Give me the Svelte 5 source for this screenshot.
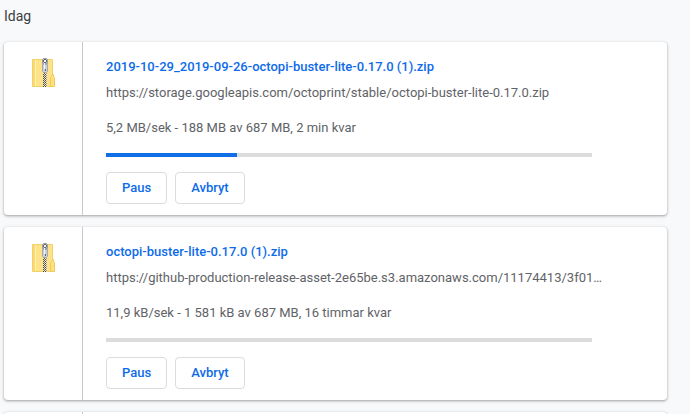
<script lang="ts">
	interface Download {
		name: string;
		url: string;
		status: string;
		percent: number;
	}

	const downloads: Download[] = [
		{
			name: '2019-10-29_2019-09-26-octopi-buster-lite-0.17.0 (1).zip',
			url: 'https://storage.googleapis.com/octoprint/stable/octopi-buster-lite-0.17.0.zip',
			status: '5,2 MB/sek - 188 MB av 687 MB, 2 min kvar',
			percent: 27
		},
		{
			name: 'octopi-buster-lite-0.17.0 (1).zip',
			url: 'https://github-production-release-asset-2e65be.s3.amazonaws.com/11174413/3f01…',
			status: '11,9 kB/sek - 1 581 kB av 687 MB, 16 timmar kvar',
			percent: 0
		}
	];
</script>

{#snippet zipIcon()}
	<svg class="zip" viewBox="0 0 24 30" aria-hidden="true">
		<path d="M1.5 1.5H21.5V28.5H1.5Z" fill="#fee38a" stroke="#f2d165" />
		<path d="M2 2H4V28H2Z" fill="#fbd974" />
		<path d="M4.5 2V28" stroke="#fff0b0" />
		<path d="M19.5 28.5V19.5L20.5 18.5V17.5L21.5 16.5H22.5V18.5L23.5 19.5V28.5Z" fill="#fddf7c" stroke="#eecb5c" />
		<path d="M12 13H16V29H12Z" fill="#efe9cc" />
		<path d="M12.5 14V29" stroke="#4c4a46" stroke-dasharray="1 1" />
		<path d="M13.5 15V29" stroke="#5c5a54" stroke-dasharray="1 1" />
		<path d="M14.5 14V29" stroke="#4c4a46" stroke-dasharray="1 1" />
		<path d="M15.5 15V29" stroke="#a39d84" stroke-dasharray="1 1" />
		<path d="M11.5 1.5L12.5 0.5H15.5L16.5 1.5V5.5H11.5Z" fill="#b5b9be" stroke="#999ea4" />
		<path d="M11.5 6.5H16.5V13.5L15.5 14.5H12.5L11.5 13.5Z" fill="#cdd0d4" stroke="#a3a8ad" />
		<path d="M13 1H15V2H16V4H15V5H13V4H12V2H13Z" fill="#62676d" />
		<path d="M13 2H15V4H13Z" fill="#f5f6f7" />
		<path d="M13.5 5V11" stroke="#f2f4f6" />
		<path d="M14 11H15V13H14Z" fill="#62676d" />
	</svg>
{/snippet}

<main>
	<h2>Idag</h2>

	<div class="list">
		{#each downloads as item}
			<article class="card">
				<div class="icon">{@render zipIcon()}</div>
				<div class="details">
					<a class="name" href="#download">{item.name}</a>
					<div class="url">{item.url}</div>
					<div class="status">{item.status}</div>
					<div
						class="progress"
						role="progressbar"
						aria-label={item.name}
						aria-valuenow={item.percent}
						aria-valuemin="0"
						aria-valuemax="100"
					>
						<div class="bar" style="width: {item.percent}%"></div>
					</div>
					<div class="actions">
						<button type="button">Paus</button>
						<button type="button">Avbryt</button>
					</div>
				</div>
			</article>
		{/each}
		<article class="card">
			<div class="icon">{@render zipIcon()}</div>
		</article>
	</div>
</main>

<style>
	:global(body) {
		margin: 0;
		background: #f8f9fa;
	}

	main {
		box-sizing: border-box;
		height: 100vh;
		overflow: hidden;
		padding: 6px 23px 0 4px;
		font-family: Roboto, 'Liberation Sans', sans-serif;
		font-size: 13px;
		line-height: 18px;
		color: #5f6368;
	}

	h2 {
		margin: 0 0 16px;
		font-size: 14px;
		font-weight: 400;
		line-height: 20px;
		color: #3c4043;
	}

	.list {
		display: flex;
		flex-direction: column;
		gap: 12px;
	}

	.card {
		display: flex;
		background: #fff;
		border-radius: 4px;
		box-shadow:
			0 1px 2px rgba(60, 64, 67, 0.3),
			0 1px 3px 1px rgba(60, 64, 67, 0.15);
	}

	.icon {
		box-sizing: border-box;
		flex: 0 0 79px;
		display: flex;
		justify-content: center;
		align-items: flex-start;
		padding-top: 16px;
		border-right: 1px solid #c8c9cb;
	}

	.zip {
		width: 24px;
		height: 30px;
	}

	.details {
		flex: 1;
		min-width: 0;
		padding: 16px 75px 11px 23px;
	}

	.name {
		display: block;
		font-weight: 500;
		color: #0d6bea;
		text-decoration: none;
	}

	.url {
		margin-top: 8px;
		white-space: nowrap;
	}

	.status {
		margin-top: 17px;
	}

	.progress {
		height: 4px;
		margin-top: 16px;
		background: #dcdcdc;
	}

	.bar {
		height: 100%;
		background: #126fe8;
	}

	.actions {
		display: flex;
		gap: 8px;
		margin-top: 15px;
	}

	button {
		height: 32px;
		padding: 0 15px;
		border: 1px solid #dadce0;
		border-radius: 4px;
		background: #fff;
		font: inherit;
		font-weight: 500;
		color: #0d6bea;
	}
</style>
